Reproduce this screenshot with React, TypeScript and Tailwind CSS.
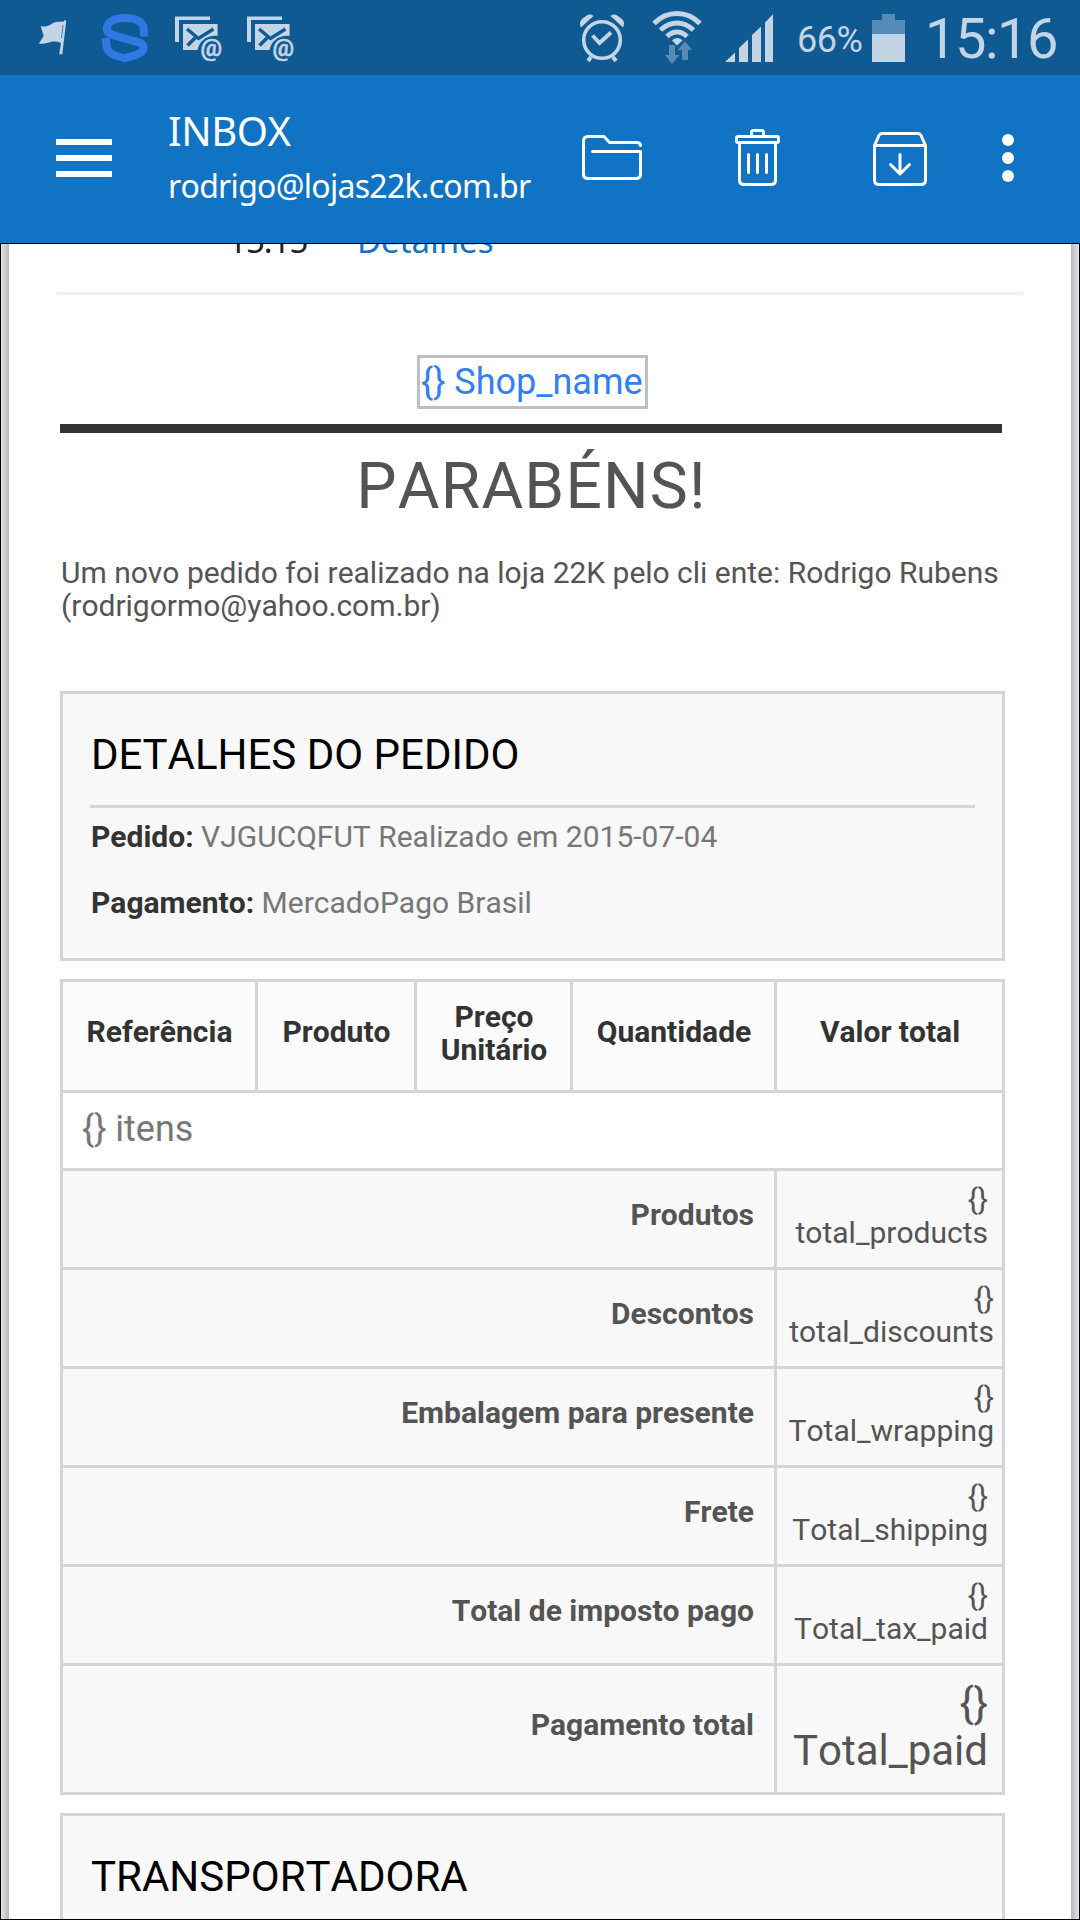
import React from 'react';

const HEADERS = [
  { label: 'Referência', pad: 'pb-[10px]' },
  { label: 'Produto', pad: 'pb-[10px]' },
  { label: 'Preço Unitário', pad: 'pb-[6px]' },
  { label: 'Quantidade', pad: 'pb-[10px]' },
  { label: 'Valor total', pad: 'pb-[10px]' },
];

const TOTALS = [
  { label: 'Produtos', value: 'total_products', pad: 'pr-[14px]' },
  { label: 'Descontos', value: 'total_discounts', pad: 'pr-[8px]' },
  { label: 'Embalagem para presente', value: 'Total_wrapping', pad: 'pr-[8px]' },
  { label: 'Frete', value: 'Total_shipping', pad: 'pr-[14px]' },
  { label: 'Total de imposto pago', value: 'Total_tax_paid', pad: 'pr-[14px]' },
];

const MailIcon: React.FC = () => (
  <svg width="50" height="50" viewBox="174 12 50 50">
    <path d="M175 41V15.500h35V19h-31v22z" fill="#c3d4e4" />
    <path d="M183 23h34.600v12c-10-1-18 4-20 14H183z" fill="#c3d4e4" />
    <path d="M187 28l11.500 9.500L213.500 28M187.500 44.500l8-8" fill="none" stroke="#105a94" strokeWidth="3.400" />
    <text x="200.500" y="54.500" fontSize="24" fontWeight="500" fill="#c3d4e4" stroke="#c3d4e4" strokeWidth="0.600" fontFamily="Roboto, sans-serif">@</text>
  </svg>
);

// Barra de status do Android
const StatusBar: React.FC = () => (
  <div className="flex h-[75px] items-center bg-[#105a94] text-[#c3d4e4]">
    <svg className="ml-[37px]" width="32" height="40" viewBox="37 19 32 40">
      <path d="M40.600 27C50 29.500 51 23 58 22.800L64 22.500V21.300L66.300 21.500 62.300 55.200H59.200L61 44C52 40 50 45 38.700 44.700L43.700 37z" fill="#c3d4e4" />
      <path d="M63 26l-1.500 13" stroke="#105a94" strokeWidth="0.700" />
    </svg>
    <svg className="ml-[31px]" width="50" height="52" viewBox="100 12 50 52">
      <path
        d="M144 36.500V32C144 22 138 18 125 18c-12 0-18 4.500-18 11 0 4 3 5.500 9 7l18 5c12 2.500 12 8.500 5 12.500-5 2.500-9 3.500-14 4.700-5-1.200-9-2.200-13-4.200-5-3-6-7-6-16"
        fill="none"
        stroke="#3079e4"
        strokeWidth="8"
      />
    </svg>
    <div className="ml-6 flex gap-[22px]">
      <MailIcon />
      <MailIcon />
    </div>

    <svg className="ml-[282px]" width="48" height="52" viewBox="578 12 48 52">
      <g fill="none" stroke="#c3d4e4">
        <circle cx="602" cy="40" r="18.300" strokeWidth="3.600" />
        <path d="M592.500 35.500l7 7.500 11.500-10.500" strokeWidth="4" />
        <path d="M591 57l-3 4M613 57l3 4" strokeWidth="4" />
      </g>
      <path d="M581 27.500c-2-5-1-7 3-10s6-4 9.500-1.500zM623 27.500c2-5 1-7-3-10s-6-4-9.500-1.500z" fill="#c3d4e4" />
    </svg>
    <svg className="ml-[25px]" width="52" height="60" viewBox="651 7 52 60">
      <g fill="none" stroke="#c3d4e4" strokeWidth="5">
        <path d="M654 22.500c13-13.500 33-13.500 46 0" />
        <path d="M660.500 29c10-9.500 23-9.500 33 0" />
        <path d="M667 35.500c6-6 14-6 20 0" />
      </g>
      <path d="M672 39.500c3-3.500 7.500-3.500 10.500 0L677 44.500z" fill="#c3d4e4" />
      <path d="M669 44h6v10h4.500L672 63l-7-9h4zM682 59h6V49h4l-7-9-7 9h4z" fill="#568bb8" />
    </svg>
    <svg className="ml-[22px]" width="48" height="52" viewBox="725 11 48 52">
      <path d="M725 61l10-9.500V61zM739 61V47l9-8.500V61zM752 61V34l9-8.500V61zM765 61V21.500l8.300-8.500v48z" fill="#c3d4e4" />
    </svg>
    <span className="ml-[24px] mt-[5px] w-[68px] text-[36px] tracking-[-0.500px]">66%</span>
    <svg className="ml-[6px]" width="36" height="52" viewBox="871 10 36 52">
      <path d="M872 18h10v-6h13v6h10v42h-33z" fill="#568bb8" />
      <path d="M872 32h33v28h-33z" fill="#c3d4e4" />
    </svg>
    <span className="ml-[18px] mt-[3px] text-[56px] leading-none tracking-[-1.500px]">15:16</span>
  </div>
);

const AppBar: React.FC = () => (
  <header className="flex h-[168px] items-center bg-[#1173c3] pb-[2px] font-['Noto_Sans',sans-serif] text-white">
    <div className="ml-[56px] flex w-[56px] flex-col gap-[10px]">
      <div className="h-[6px] bg-white" />
      <div className="h-[6px] bg-white" />
      <div className="h-[6px] bg-white" />
    </div>
    <div className="ml-[56px] w-[414px] self-start whitespace-nowrap">
      <div className="mt-[29px] text-[40px] leading-[54px] tracking-[-0.400px]">INBOX</div>
      <div className="mt-[6px] text-[32px] leading-[44px] tracking-[-0.720px]">rodrigo@lojas22k.com.br</div>
    </div>
    <svg width="60" height="60" viewBox="582 128 60 60" fill="none" stroke="white" strokeWidth="3" strokeLinecap="round" strokeLinejoin="round">
      <path d="M640.500 145.500c0-2-1.500-3-4-3H609.500l-5.500-6H588c-3 0-4.500 1.500-4.500 4.500V174c0 3 1.500 4.500 4.500 4.500h48c3 0 4.500-1.500 4.500-4.500v-22.500H592.500" />
    </svg>
    <svg className="ml-[92px]" width="47" height="60" viewBox="734 128 47 60" fill="none" stroke="white" strokeWidth="3" strokeLinecap="round" strokeLinejoin="round">
      <rect x="736.500" y="136.500" width="42" height="6" rx="1.500" />
      <path d="M751.500 136v-3.500q0-2 2-2h8q2 0 2 2v3.500" />
      <path d="M739.500 145V180q0 4.500 4.500 4.500h27q4.500 0 4.500-4.500V145M748.500 154.500v18M757.500 154.500v18M766.500 154.500v18" />
    </svg>
    <svg className="ml-[92px]" width="54" height="60" viewBox="873 128 54 60" fill="none" stroke="white" strokeWidth="3" strokeLinecap="round" strokeLinejoin="round">
      <path d="M874.500 145.500h51V180q0 4.500-4.500 4.500h-42q-4.500 0-4.500-4.500zl4.500-10q1-2 3-2h36q2 0 3 2l4.500 10" />
      <path d="M900 154.500v19M890.500 164.500l9.500 9.500 9.500-9.500" />
    </svg>
    <div className="ml-[75px] flex flex-col gap-[6px]">
      <div className="size-3 rounded-full bg-white" />
      <div className="size-3 rounded-full bg-white" />
      <div className="size-3 rounded-full bg-white" />
    </div>
  </header>
);

const OrderTable: React.FC = () => (
  <table className="mt-[18px] w-[945px] table-fixed border-collapse text-[30px] leading-[33px] text-[#555454]">
    <colgroup>
      <col className="w-[195px]" />
      <col className="w-[159px]" />
      <col className="w-[156px]" />
      <col className="w-[204px]" />
      <col className="w-[228px]" />
    </colgroup>
    <thead>
      <tr className="h-[111px] bg-[#fbfbfb] text-[#333333]">
        {HEADERS.map((h) => (
          <th key={h.label} className={`border-3 border-[#d6d4d4] pl-px font-bold ${h.pad}`}>{h.label}</th>
        ))}
      </tr>
    </thead>
    <tbody>
      <tr className="h-[78px]">
        <td colSpan={5} className="border-3 border-[#d6d4d4] pb-1 pl-[19px] text-[36px] leading-[36px] text-[#777777]">{'{} itens'}</td>
      </tr>
      {TOTALS.map((row) => (
        <tr key={row.label} className="h-[99px] bg-[#f8f8f8]">
          <td colSpan={4} className="border-3 border-[#d6d4d4] pr-[20px] pb-[10px] text-right font-bold">{row.label}</td>
          <td className={`border-3 border-[#d6d4d4] pb-[6px] text-right ${row.pad}`}>
            {'{}'}
            <br />
            {row.value}
          </td>
        </tr>
      ))}
      <tr className="h-[129px] bg-[#f8f8f8]">
        <td colSpan={4} className="border-3 border-[#d6d4d4] pr-[20px] pb-[10px] text-right font-bold">Pagamento total</td>
        <td className="border-3 border-[#d6d4d4] pr-[14px] pb-1 text-right text-[42px] leading-[47px]">
          {'{}'}
          <br />
          Total_paid
        </td>
      </tr>
    </tbody>
  </table>
);

const App: React.FC = () => {
  return (
    <div className="flex h-[1920px] w-[1080px] flex-col overflow-hidden bg-white font-['Roboto',sans-serif] [font-kerning:none]">
      <StatusBar />
      <AppBar />

      <main className="flex min-h-0 flex-1 border border-black">
        <div className="w-2 shrink-0 bg-linear-to-r from-[#e6e4ea] to-[#b8b7bf]" />
        <div className="flex-1 overflow-hidden">
          {/* linha da data, parcialmente escondida pela rolagem */}
          <div className="ml-[48px] -mt-[30px] flex h-[81px] w-[966px] border-b-3 border-[#f0eff6] pl-[171px] font-['Noto_Sans',sans-serif] text-[33px] leading-[54px]">
            <span className="w-[129px] tracking-[-1px] text-[#222222]">15:15</span>
            <span className="text-[#1173c3]">Detalhes</span>
          </div>

          <div className="ml-[51px] flex w-[945px] flex-col">
            <div className="mt-[60px] ml-[357px] flex h-[54px] w-[231px] items-center border-3 border-[#bfbfbf] pl-px text-[36px] whitespace-nowrap text-[#337ff1]">
              {'{} Shop_name'}
            </div>
            <div className="mt-[15px] h-[9px] w-[942px] bg-[#333333]" />
            <h1 className="mt-[22px] w-[943px] text-center text-[64px] leading-[64px] tracking-[1.200px] text-[#555454]">PARABÉNS!</h1>
            <p className="mt-[37px] ml-px text-[30px] leading-[33px] tracking-[-0.010px] whitespace-nowrap text-[#555454]">
              Um novo pedido foi realizado na loja 22K pelo cli ente: Rodrigo Rubens
              <br />
              (rodrigormo@yahoo.com.br)
            </p>

            <section className="mt-[69px] h-[270px] border-3 border-[#d6d4d4] bg-[#f8f8f8] px-[27px] text-[30px] leading-[33px]">
              <h2 className="mt-[34px] h-[80px] border-b-3 border-[#d6d4d4] pl-px text-[42px] leading-[54px] text-black">DETALHES DO PEDIDO</h2>
              <p className="mt-[12px] ml-px text-[#777777]">
                <b className="text-[#333333]">Pedido:</b> VJGUCQFUT Realizado em 2015-07-04
              </p>
              <p className="mt-[33px] ml-px text-[#777777]">
                <b className="text-[#333333]">Pagamento:</b> MercadoPago Brasil
              </p>
            </section>

            <OrderTable />

            <section className="mt-[18px] h-[270px] border-3 border-[#d6d4d4] bg-[#f8f8f8] px-[27px]">
              <h2 className="mt-[34px] pl-px text-[42px] leading-[54px] text-black">TRANSPORTADORA</h2>
            </section>
          </div>
        </div>
        <div className="w-2 shrink-0 bg-linear-to-r from-[#b8b7bf] to-[#e2e4ea]" />
      </main>
    </div>
  );
};

export default App;
